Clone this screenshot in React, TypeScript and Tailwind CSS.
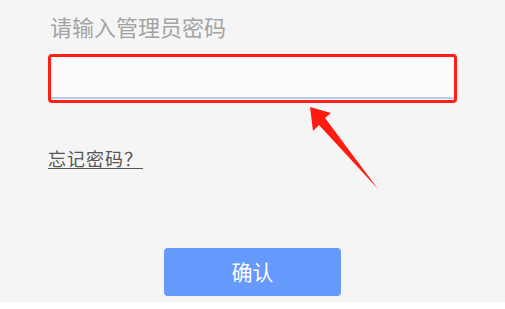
export default function App() {
  return (
    <div
      className="flex h-[309px] w-[505px] flex-col bg-white"
      style={{ fontFamily: '"Noto Sans CJK SC", "Noto Sans", sans-serif' }}
    >
      <div className="relative flex h-[302px] flex-col bg-[#f5f5f5] pl-[48px]">
        <div className="mt-[11px] pl-[2px] text-[22px] leading-[30px] text-[#a3a3a3]">请输入管理员密码</div>

        <div className="mt-[13px] h-[49px] w-[409px] rounded-[4px] border-[3px] border-[#ff1f14] bg-[#fcfcfc]">
          <div className="mt-[40px] h-[2px] w-full bg-[#b9cdf2]" />
        </div>

        <div className="mt-[44px]">
          <a className="text-[18px] leading-[22px] tracking-[1px] text-[#555] underline underline-offset-2">
            忘记密码？
          </a>
        </div>

        <div className="mt-[77px] flex justify-center pr-[48px]">
          <button
            type="button"
            className="h-[48px] w-[177px] rounded-[4px] bg-[#6699fc] text-[21px] text-white"
          >
            确认
          </button>
        </div>

        <svg className="absolute left-0 top-0" width="505" height="302" viewBox="0 0 505 302">
          <polygon
            points="310,107 331,113 325,118 378,189 319,125 313,131"
            fill="#ff1a12"
          />
        </svg>
      </div>
    </div>
  );
}
